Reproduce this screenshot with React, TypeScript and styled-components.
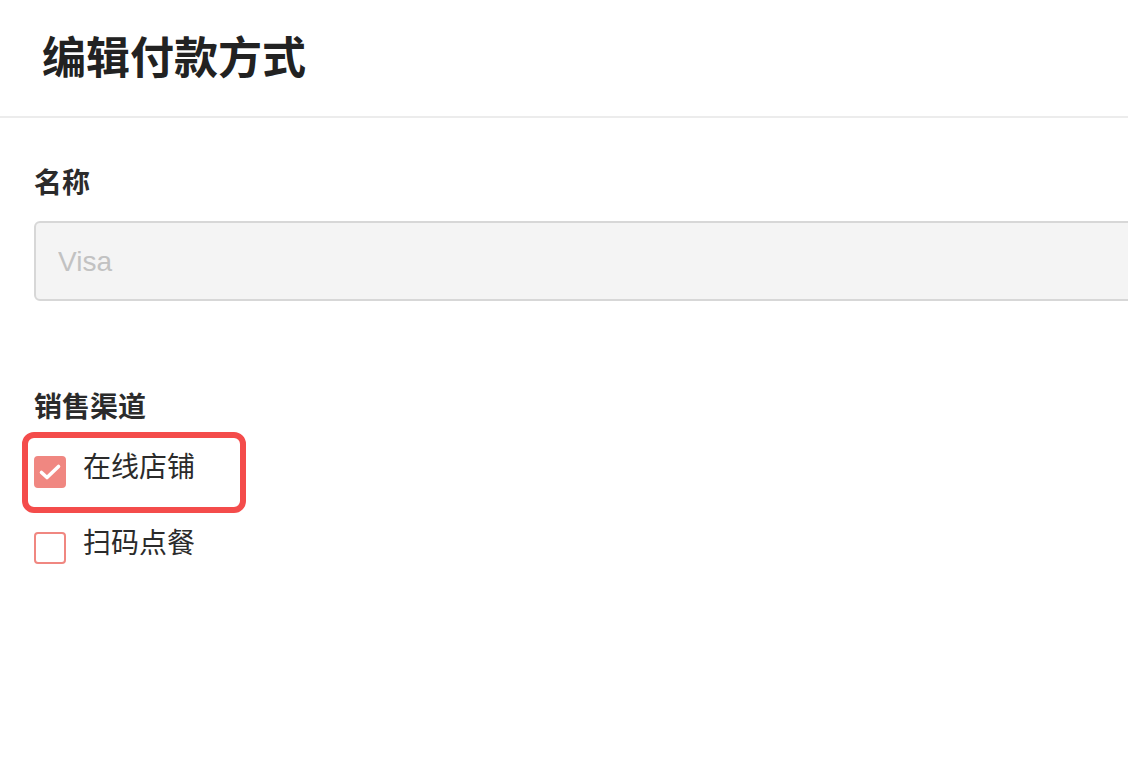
import React from "react";
import styled, { createGlobalStyle } from "styled-components";

const GlobalStyle = createGlobalStyle`
  html, body {
    margin: 0;
    padding: 0;
    background: #ffffff;
    overflow: hidden;
  }
  body {
    font-family: "Noto Sans CJK SC", "Noto Sans", sans-serif;
    color: #2b2b2b;
  }
  * { box-sizing: border-box; }
`;

const Page = styled.div`
  width: 1128px;
  height: 778px;
  background: #fff;
  overflow: hidden;
`;

const Header = styled.header`
  height: 118px;
  padding: 0 0 6px 42px;
  display: flex;
  align-items: center;
  border-bottom: 2px solid #ececec;
`;

const Title = styled.h1`
  margin: 0;
  font-size: 44px;
  line-height: 60px;
  font-weight: 700;
  color: #222;
`;

const Body = styled.div`
  padding: 43px 0 0 34px;
  display: flex;
  flex-direction: column;
`;

const Label = styled.div<{ $gap: number }>`
  font-size: 28px;
  line-height: 40px;
  font-weight: 700;
  color: #2b2b2b;
  margin-bottom: ${(p) => p.$gap}px;
`;

const TextInput = styled.input`
  width: 1120px;
  height: 80px;
  border: 2px solid #d7d7d7;
  border-radius: 6px;
  background: #f4f4f4;
  padding: 2px 22px 0;
  font-family: "Liberation Sans", Arial, sans-serif;
  font-size: 28px;
  color: #c2c2c2;
  outline: none;
  margin-bottom: 84px;
  &::placeholder { color: #c2c2c2; }
`;

const Options = styled.div`
  display: flex;
  flex-direction: column;
  gap: 44px;
`;

const Option = styled.label`
  position: relative;
  display: flex;
  align-items: flex-start;
  gap: 17px;
  height: 32px;
`;

const Box = styled.span<{ $checked?: boolean }>`
  width: 32px;
  height: 32px;
  flex: none;
  border-radius: 4px;
  display: flex;
  align-items: center;
  justify-content: center;
  background: ${(p) => (p.$checked ? "#f08781" : "#fff")};
  border: 2px solid #f08781;
`;

const OptionText = styled.span`
  font-size: 28px;
  line-height: 18px;
  color: #2b2b2b;
`;

const Highlight = styled.span`
  position: absolute;
  left: -12px;
  top: -24px;
  width: 224px;
  height: 81px;
  border: 6px solid #f44c4b;
  border-radius: 12px;
  pointer-events: none;
`;

const Check = () => (
  <svg width="32" height="32" viewBox="0 0 32 32" style={{ margin: -2 }}>
    <path
      d="M7.5 16.5 L13 21.5 L24.5 10.5"
      fill="none"
      stroke="#fff"
      strokeWidth="3.6"
      strokeLinecap="round"
      strokeLinejoin="round"
    />
  </svg>
);

export default function App() {
  return (
    <Page>
      <GlobalStyle />
      <Header>
        <Title>编辑付款方式</Title>
      </Header>
      <Body>
        <Label $gap={20}>名称</Label>
        <TextInput readOnly value="Visa" />
        <Label $gap={31}>销售渠道</Label>
        <Options>
          <Option>
            <Box $checked>
              <Check />
            </Box>
            <OptionText>在线店铺</OptionText>
            <Highlight />
          </Option>
          <Option>
            <Box />
            <OptionText>扫码点餐</OptionText>
          </Option>
        </Options>
      </Body>
    </Page>
  );
}
